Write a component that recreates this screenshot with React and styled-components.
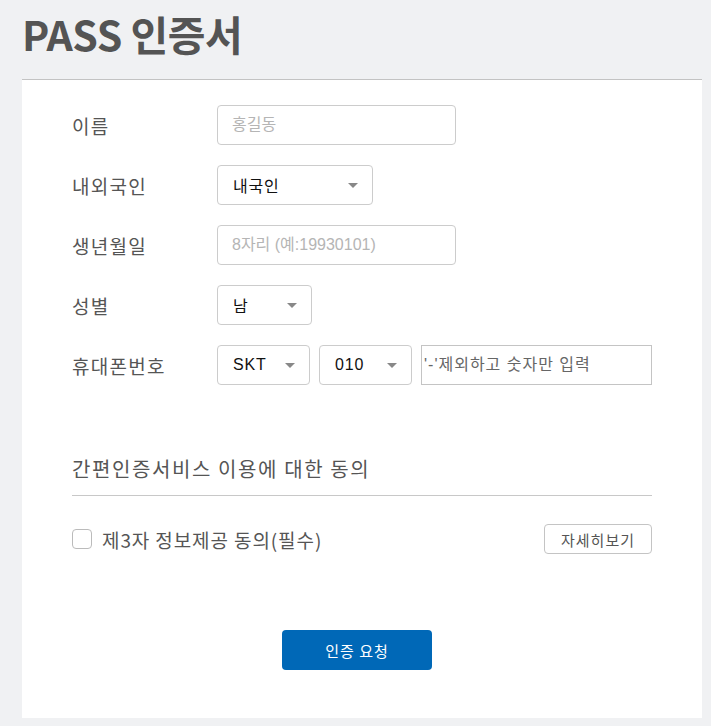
import styled, { createGlobalStyle } from "styled-components";

const GlobalStyle = createGlobalStyle`
  html, body {
    margin: 0;
    padding: 0;
    background: #f0f1f3;
  }
  body {
    font-family: "Noto Sans CJK KR", "Noto Sans", sans-serif;
    color: #555;
  }
`;

const Page = styled.div`
  padding: 0 9px 8px 22px;
`;

const Title = styled.h1`
  margin: 0;
  padding-top: 9px;
  height: 79px;
  box-sizing: border-box;
  font-size: 41px;
  font-weight: 700;
  color: #545454;
  line-height: 48px;
  letter-spacing: -0.5px;
`;

const Card = styled.div`
  background: #fff;
  border-top: 1px solid #c3c3c3;
  padding: 25px 50px 48px;
  display: flex;
  flex-direction: column;
`;

const Form = styled.div`
  display: flex;
  flex-direction: column;
  gap: 20px;
`;

const Row = styled.div`
  display: flex;
  align-items: center;
  gap: 9px;
`;

const Label = styled.div`
  width: 136px;
  font-size: 19px;
  letter-spacing: 1.3px;
  color: #555;
`;

const Input = styled.input`
  box-sizing: border-box;
  width: ${(p) => p.$w}px;
  height: 40px;
  border: 1px solid #ccc;
  border-radius: ${(p) => (p.$square ? 0 : 4)}px;
  padding: 0 14px;
  font-size: 16px;
  font-family: "Liberation Sans", "Noto Sans CJK KR", sans-serif;
  color: #222;
  outline: none;
  &::placeholder {
    color: #b5b5b5;
  }
`;

const PhoneInput = styled(Input)`
  padding: 0 2px;
  border-color: #c4c4c4;
  letter-spacing: 1px;
  &::placeholder {
    color: #666;
  }
`;

const Select = styled.div`
  box-sizing: border-box;
  width: ${(p) => p.$w}px;
  height: 40px;
  border: 1px solid #ccc;
  border-radius: 4px;
  padding: 0 14px 0 15px;
  display: flex;
  align-items: center;
  justify-content: space-between;
  font-size: 16px;
  font-family: "Liberation Sans", "Noto Sans CJK KR", sans-serif;
  letter-spacing: 0.8px;
  color: #111;
  background: #fff;
`;

const Caret = styled.span`
  width: 0;
  height: 0;
  border-left: 5px solid transparent;
  border-right: 5px solid transparent;
  border-top: 5px solid #888;
`;

const SectionTitle = styled.div`
  margin-top: 70px;
  font-size: 20px;
  line-height: 28px;
  color: #555;
  padding-bottom: 12px;
  border-bottom: 1px solid #c8c8c8;
  letter-spacing: 1.6px;
`;

const AgreeRow = styled.div`
  display: flex;
  align-items: center;
  justify-content: space-between;
  margin-top: 28px;
`;

const CheckLabel = styled.label`
  display: flex;
  align-items: center;
  gap: 10px;
  font-size: 19px;
  letter-spacing: 0.9px;
  color: #555;
`;

const Box = styled.span`
  box-sizing: border-box;
  width: 20px;
  height: 20px;
  border: 1px solid #bbb;
  border-radius: 4px;
  background: #fff;
`;

const DetailButton = styled.button`
  box-sizing: border-box;
  width: 108px;
  height: 30px;
  border: 1px solid #c4c4c4;
  border-radius: 4px;
  background: #fff;
  font-family: "Noto Sans CJK KR", sans-serif;
  font-size: 15px;
  letter-spacing: 1px;
  color: #555;
`;

const SubmitButton = styled.button`
  align-self: center;
  margin-top: 76px;
  margin-right: 10px;
  width: 150px;
  height: 40px;
  border: none;
  border-radius: 4px;
  background: #0068b7;
  color: #fff;
  font-family: "Noto Sans CJK KR", sans-serif;
  font-size: 15px;
  letter-spacing: 1px;
`;

function Dropdown({ width, value }) {
  return (
    <Select $w={width}>
      <span>{value}</span>
      <Caret />
    </Select>
  );
}

export default function App() {
  return (
    <>
      <GlobalStyle />
      <Page>
        <Title>PASS 인증서</Title>
        <Card>
          <Form>
            <Row>
              <Label>이름</Label>
              <Input $w={239} placeholder="홍길동" />
            </Row>
            <Row>
              <Label>내외국인</Label>
              <Dropdown width={156} value="내국인" />
            </Row>
            <Row>
              <Label>생년월일</Label>
              <Input $w={239} placeholder="8자리 (예:19930101)" />
            </Row>
            <Row>
              <Label>성별</Label>
              <Dropdown width={95} value="남" />
            </Row>
            <Row>
              <Label>휴대폰번호</Label>
              <Dropdown width={93} value="SKT" />
              <Dropdown width={93} value="010" />
              <PhoneInput $w={231} $square placeholder="'-'제외하고 숫자만 입력" />
            </Row>
          </Form>
          <SectionTitle>간편인증서비스 이용에 대한 동의</SectionTitle>
          <AgreeRow>
            <CheckLabel>
              <Box />
              제3자 정보제공 동의(필수)
            </CheckLabel>
            <DetailButton>자세히보기</DetailButton>
          </AgreeRow>
          <SubmitButton>인증 요청</SubmitButton>
        </Card>
      </Page>
    </>
  );
}
